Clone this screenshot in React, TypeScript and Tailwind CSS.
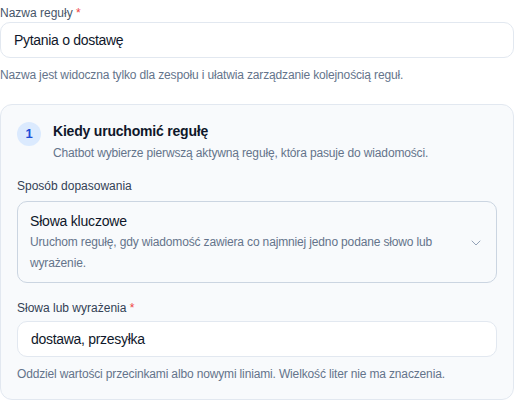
import { ChevronDown } from 'lucide-react'

export default function App() {
  return (
    <div className="w-[514px] h-[400px] overflow-hidden bg-white font-['Liberation_Sans',Arial,sans-serif]">
      {/* Nazwa reguły */}
      <div className="pt-[6px]">
        <label className="block text-[12px] leading-[14px] text-[#475569]">
          Nazwa reguły <span className="text-[#ef4444]">*</span>
        </label>
        <div className="mt-[2px] h-[36px] flex items-center px-[13px] rounded-[10px] border border-[#e2e8f0] bg-white text-[14px] tracking-[-0.3px] text-[#0f172a]">
          Pytania o dostawę
        </div>
        <p className="mt-[10px] text-[12px] leading-[14px] tracking-[-0.15px] text-[#64748b]">
          Nazwa jest widoczna tylko dla zespołu i ułatwia zarządzanie kolejnością reguł.
        </p>
      </div>

      {/* Karta */}
      <div className="mt-[22px] rounded-[12px] border border-[#e2e8f0] bg-[#f8fafc] px-4 pt-4 pb-[18px]">
        <div className="flex gap-3">
          <div className="w-6 h-6 rounded-full bg-[#dbeafe] text-[#1d4ed8] text-[13px] font-bold flex items-center justify-center mt-[1px]">
            1
          </div>
          <div>
            <h3 className="text-[14px] leading-[20px] font-bold tracking-[-0.2px] text-[#0f172a]">Kiedy uruchomić regułę</h3>
            <p className="mt-[4px] text-[12px] leading-[16px] tracking-[-0.15px] text-[#64748b]">
              Chatbot wybierze pierwszą aktywną regułę, która pasuje do wiadomości.
            </p>
          </div>
        </div>

        <label className="block mt-[18px] text-[12px] leading-[14px] text-[#334155]">Sposób dopasowania</label>
        <div className="mt-[8px] flex items-center gap-3 rounded-[10px] border border-[#cbd5e1] bg-[#f8fafc] pl-[12px] pr-[12px] pt-[9px] pb-[8px]">
          <div className="flex-1">
            <div className="text-[14px] leading-[20px] tracking-[-0.2px] text-[#0f172a]">Słowa kluczowe</div>
            <div className="mt-[1px] text-[12px] leading-[21px] tracking-[-0.15px] text-[#64748b]">
              Uruchom regułę, gdy wiadomość zawiera co najmniej jedno podane słowo lub wyrażenie.
            </div>
          </div>
          <ChevronDown className="w-4 h-4 text-[#94a3b8]" strokeWidth={1.5} />
        </div>

        <label className="block mt-[18px] text-[12px] leading-[14px] text-[#334155]">
          Słowa lub wyrażenia <span className="text-[#ef4444]">*</span>
        </label>
        <div className="mt-[6px] h-[36px] flex items-center px-[13px] rounded-[10px] border border-[#e2e8f0] bg-white text-[14px] tracking-[-0.3px] text-[#0f172a]">
          dostawa, przesyłka
        </div>
        <p className="mt-[10px] text-[12px] leading-[14px] tracking-[-0.15px] text-[#64748b]">
          Oddziel wartości przecinkami albo nowymi liniami. Wielkość liter nie ma znaczenia.
        </p>
      </div>
    </div>
  )
}
